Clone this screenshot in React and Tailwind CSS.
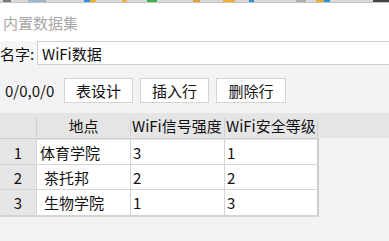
import React from "react";

const font = { fontFamily: '"Noto Sans CJK SC", "Noto Sans", sans-serif' };

const rows = [
  { id: 1, place: "体育学院", signal: "3", level: "1", pad: "pl-[3px]" },
  { id: 2, place: "茶托邦", signal: "2", level: "2", pad: "pl-[7px]" },
  { id: 3, place: "生物学院", signal: "1", level: "3", pad: "pl-[7px]" },
];

const TopStrip = () => (
  <div className="h-[3px] bg-[#d9d9d9] flex items-stretch border-b border-[#c4c4c4]">
    <span className="ml-[3px] w-[8px] bg-[#7a7a7a]" />
    <span className="ml-[17px] w-[18px] bg-[#9fb8cc]" />
    <span className="ml-[38px] w-[6px] bg-[#2d8fd8]" />
    <span className="w-[6px] bg-[#f0b030]" />
    <span className="ml-[26px] w-[5px] bg-[#f0b030]" />
    <span className="ml-[20px] w-[10px] bg-[#3cb44a]" />
    <span className="ml-[36px] w-[7px] bg-[#e0a040]" />
    <span className="ml-[23px] w-[12px] bg-[#f0b030]" />
    <span className="ml-[14px] w-[5px] bg-[#2d8fd8]" />
    <span className="ml-[42px] w-[10px] bg-[#b0b0b0]" />
    <span className="ml-[10px] w-[8px] bg-[#f0b030]" />
    <span className="w-[6px] bg-[#2d8fd8]" />
    <span className="ml-auto w-[16px] bg-[#444]" />
  </div>
);

const HeaderCell = ({ w, children, center }) => (
  <div className={`${w} h-full flex items-center`}>
    <div className={`flex-1 ${center ? "text-center" : "pl-px"} whitespace-nowrap`}>{children}</div>
    <span className="w-px h-[19px] self-end mb-px bg-white border-l border-[#cfcfcf]" />
  </div>
);

export default function App() {
  return (
    <div style={font} className="w-[389px] h-[241px] overflow-hidden bg-[#f3f3f5] text-[15px] text-[#111] leading-none">
      <TopStrip />

      {/* title */}
      <div className="h-[38px] bg-white flex items-center pl-[3px] text-[#a8a8a8] pt-[1px]">内置数据集</div>

      {/* name */}
      <div className="h-[24px] flex">
        <div className="w-[37px] flex items-center bg-[#f5f5f7] whitespace-nowrap">名字:</div>
        <div className="flex-1 bg-white border-y border-l border-[#d0d0d0] flex items-center pl-[4px]">WiFi数据</div>
      </div>

      {/* toolbar */}
      <div className="h-[48px] flex items-center pl-[5px] pt-[2px]">
        <span className="w-[59px]">0/0,0/0</span>
        <button className="w-[69px] h-[25px] bg-white border border-[#d4d4d4]">表设计</button>
        <button className="ml-[7px] w-[69px] h-[25px] bg-white border border-[#d4d4d4]">插入行</button>
        <button className="ml-[7px] w-[70px] h-[25px] bg-white border border-[#d4d4d4]">删除行</button>
      </div>

      {/* table */}
      <div className="h-[25px] bg-[#e5e5e5] flex">
        <HeaderCell w="w-[37px]" />
        <HeaderCell w="w-[94px]" center>地点</HeaderCell>
        <HeaderCell w="w-[94px]">WiFi信号强度</HeaderCell>
        <HeaderCell w="w-[93px]">WiFi安全等级</HeaderCell>
      </div>
      <div className="w-[319px] border-t border-[#cdcdcd] border-b-2 border-r-2 border-b-[#d4d4d4] border-r-[#cdcdcd]">
        <div className="h-px bg-[#e5e5e5]" />
        {rows.map((r) => (
          <div key={r.id} className="h-[25px] flex border-b border-[#d4d4d4] last:border-b-0">
            <div className="w-[37px] bg-[#e6e6e6] border-r border-[#d4d4d4] flex items-center justify-center">{r.id}</div>
            <div className={`w-[94px] bg-white border-r border-[#d4d4d4] flex items-center ${r.pad}`}>{r.place}</div>
            <div className="w-[94px] bg-white border-r border-[#d4d4d4] flex items-center pl-[2px]">{r.signal}</div>
            <div className="flex-1 bg-white flex items-center pl-[2px]">{r.level}</div>
          </div>
        ))}
      </div>
    </div>
  );
}
